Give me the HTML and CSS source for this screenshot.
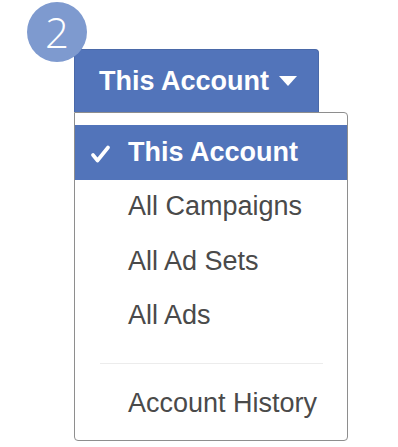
FILE: index.html
```html
<!DOCTYPE html>
<html lang="en">
<head>
    <meta charset="UTF-8">
    <meta name="viewport" content="width=device-width, initial-scale=1.0">
    <title>Account Switcher</title>
    <link rel="stylesheet" href="styles.css">
</head>
<body>
    <div class="scene">
        <span class="step">2</span>

        <button class="toggle">
            This Account
            <svg class="caret" width="18" height="10" viewBox="0 0 18 10"><path d="M0 0H18L9 10Z" fill="#fff"/></svg>
        </button>

        <ul class="menu">
            <li class="item active">
                <span class="check">
                    <svg width="19" height="18" viewBox="0 0 19 18"><path d="M2 10L6.5 15.5L17 2.5" fill="none" stroke="#fff" stroke-width="3.6" stroke-linecap="round" stroke-linejoin="round"/></svg>
                </span>
                This Account
            </li>
            <li class="item">All Campaigns</li>
            <li class="item">All Ad Sets</li>
            <li class="item">All Ads</li>
            <li class="divider"></li>
            <li class="item">Account History</li>
        </ul>
    </div>
</body>
</html>
```

FILE: styles.css
```css
:root {
    --fb-blue: #5274ba;
    --step-blue: #7e9acf;
    --text: #4a4a4a;
}

body {
    margin: 0;
    background: #fff;
    font-family: 'Liberation Sans', Arial, sans-serif;
}

.scene {
    position: relative;
    padding: 49px 0 0 74px;
}

/* numbered step marker */
.step {
    position: absolute;
    left: 27px;
    top: 2px;
    width: 60px;
    height: 60px;
    border-radius: 50%;
    background: var(--step-blue);
    color: #fff;
    font-family: 'Open Sans', sans-serif;
    font-weight: 300;
    font-size: 42px;
    line-height: 60px;
    text-align: center;
    z-index: 2;
}

.toggle {
    display: flex;
    align-items: center;
    box-sizing: border-box;
    width: 245px;
    height: 63px;
    margin: 0;
    padding: 0 0 0 24px;
    border: 1px solid #4a69a8;
    border-bottom: none;
    border-radius: 4px 4px 0 0;
    background: var(--fb-blue);
    color: #fff;
    font-family: inherit;
    font-weight: bold;
    font-size: 27px;
    cursor: pointer;
}

.caret {
    margin-left: 10px;
}

.menu {
    list-style: none;
    width: 272px;
    margin: 0;
    padding: 12px 0 9px;
    border: 1px solid #8e8e8e;
    border-radius: 0 4px 4px 4px;
}

.item {
    display: flex;
    align-items: center;
    height: 54.5px;
    padding-left: 53px;
    color: var(--text);
    font-size: 27px;
}

.item.active {
    padding-left: 0;
    background: var(--fb-blue);
    color: #fff;
    font-weight: bold;
}

.check {
    display: flex;
    box-sizing: border-box;
    width: 53px;
    padding-left: 16px;
    padding-top: 4px;
}

.divider {
    height: 1px;
    margin: 20px 24px 12px 25px;
    background: #ececec;
}
```
